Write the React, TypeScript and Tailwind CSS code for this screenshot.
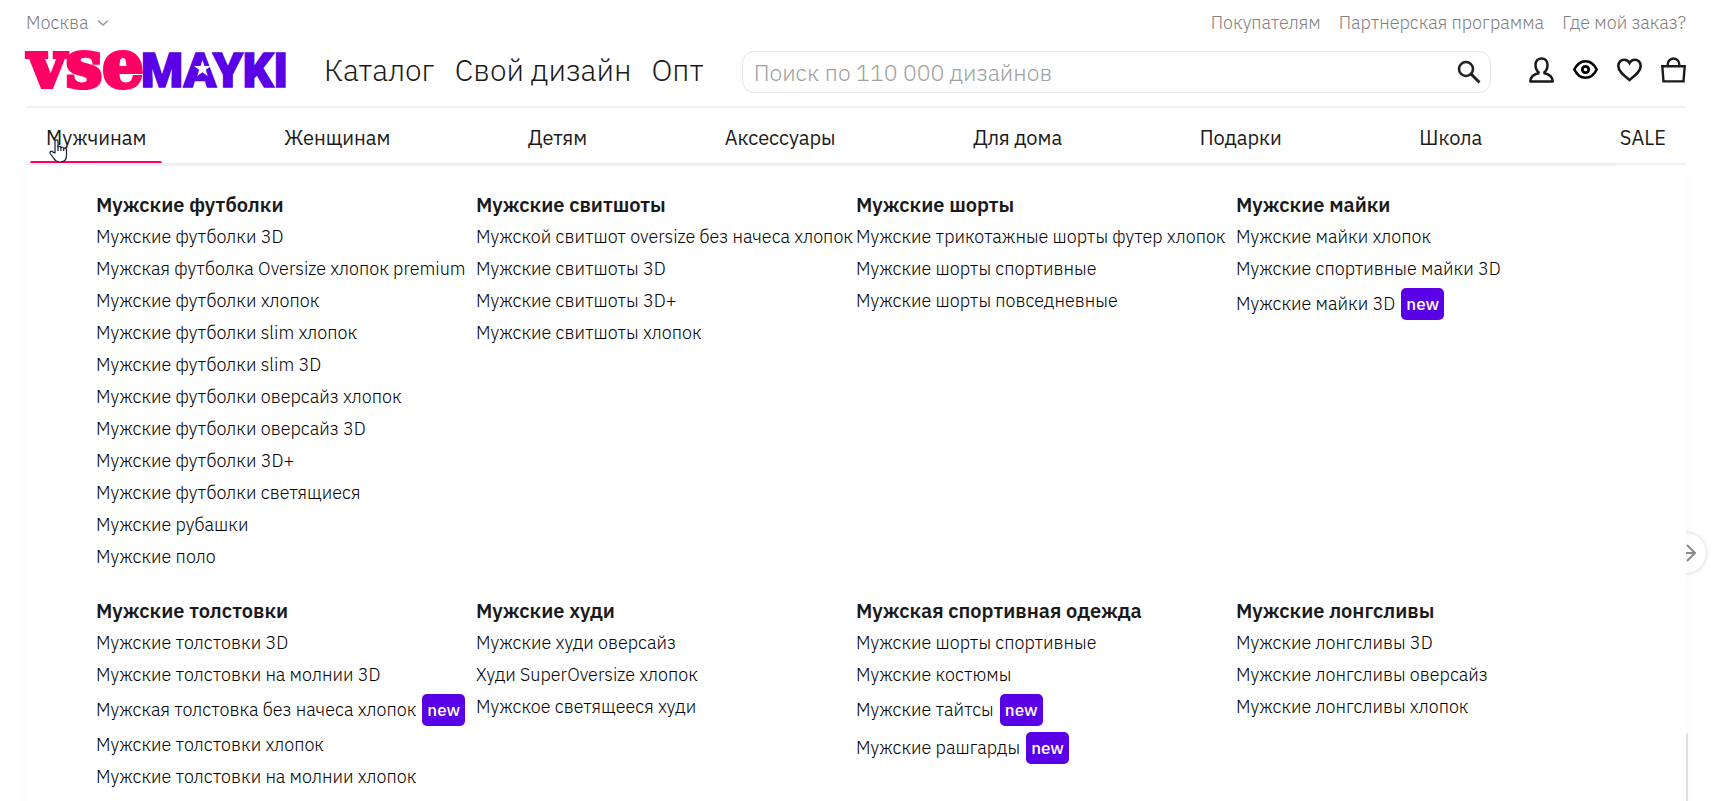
import React, { useState } from 'react';

type MenuItem = { label: string; isNew?: boolean };
type MenuGroup = { title: string; items: MenuItem[] };

const topLinks = ['Покупателям', 'Партнерская программа', 'Где мой заказ?'];
const mainLinks = ['Каталог', 'Свой дизайн', 'Опт'];
const categories = ['Мужчинам', 'Женщинам', 'Детям', 'Аксессуары', 'Для дома', 'Подарки', 'Школа', 'SALE'];

const groups: MenuGroup[] = [
  {
    title: 'Мужские футболки',
    items: [
      { label: 'Мужские футболки 3D' },
      { label: 'Мужская футболка Oversize хлопок premium' },
      { label: 'Мужские футболки хлопок' },
      { label: 'Мужские футболки slim хлопок' },
      { label: 'Мужские футболки slim 3D' },
      { label: 'Мужские футболки оверсайз хлопок' },
      { label: 'Мужские футболки оверсайз 3D' },
      { label: 'Мужские футболки 3D+' },
      { label: 'Мужские футболки светящиеся' },
      { label: 'Мужские рубашки' },
      { label: 'Мужские поло' },
    ],
  },
  {
    title: 'Мужские свитшоты',
    items: [
      { label: 'Мужской свитшот oversize без начеса хлопок' },
      { label: 'Мужские свитшоты 3D' },
      { label: 'Мужские свитшоты 3D+' },
      { label: 'Мужские свитшоты хлопок' },
    ],
  },
  {
    title: 'Мужские шорты',
    items: [
      { label: 'Мужские трикотажные шорты футер хлопок' },
      { label: 'Мужские шорты спортивные' },
      { label: 'Мужские шорты повседневные' },
    ],
  },
  {
    title: 'Мужские майки',
    items: [
      { label: 'Мужские майки хлопок' },
      { label: 'Мужские спортивные майки 3D' },
      { label: 'Мужские майки 3D', isNew: true },
    ],
  },
  {
    title: 'Мужские толстовки',
    items: [
      { label: 'Мужские толстовки 3D' },
      { label: 'Мужские толстовки на молнии 3D' },
      { label: 'Мужская толстовка без начеса хлопок', isNew: true },
      { label: 'Мужские толстовки хлопок' },
      { label: 'Мужские толстовки на молнии хлопок' },
    ],
  },
  {
    title: 'Мужские худи',
    items: [
      { label: 'Мужские худи оверсайз' },
      { label: 'Худи SuperOversize хлопок' },
      { label: 'Мужское светящееся худи' },
    ],
  },
  {
    title: 'Мужская спортивная одежда',
    items: [
      { label: 'Мужские шорты спортивные' },
      { label: 'Мужские костюмы' },
      { label: 'Мужские тайтсы', isNew: true },
      { label: 'Мужские рашгарды', isNew: true },
    ],
  },
  {
    title: 'Мужские лонгсливы',
    items: [
      { label: 'Мужские лонгсливы 3D' },
      { label: 'Мужские лонгсливы оверсайз' },
      { label: 'Мужские лонгсливы хлопок' },
    ],
  },
];

const App: React.FC = () => {
  const [active, setActive] = useState('Мужчинам');
  const [query, setQuery] = useState('');

  return (
    <div className="relative h-screen overflow-hidden bg-white pl-[26px] pr-[43px] flex flex-col font-['IBM_Plex_Sans',Roboto,sans-serif] text-[#1a1a1a]">
      <header className="border-b-2 border-[#f0f0f5] pb-[13px]">
        <div className="flex items-center justify-between pt-[11px] pb-4 text-[18px] leading-6 font-light text-[#808080]">
          <button type="button" className="flex items-center gap-2">
            Москва
            <svg width="14" height="10" viewBox="0 0 14 10" fill="none" stroke="#999" strokeWidth="1.6"><path d="M2 2.500l5 4.500 5-4.500" /></svg>
          </button>
          <nav className="flex gap-[18px]">
            {topLinks.map(link => <a key={link} href="#">{link}</a>)}
          </nav>
        </div>
        <div className="flex items-center">
          <a href="#" aria-label="vsemayki" className="shrink-0"><Logo /></a>
          <nav className="flex gap-5 ml-[36px] pb-1 text-[30px] leading-[38px] font-light text-[#1a1a1a] whitespace-nowrap">
            {mainLinks.map(link => <a key={link} href="#">{link}</a>)}
          </nav>
          <form onSubmit={e => e.preventDefault()} className="flex flex-1 items-center h-[42px] ml-[38px] mr-[38px] pl-[11px] pr-[9px] border border-[#e6e6e6] rounded-xl">
            <input
              type="text"
              aria-label="Поиск"
              placeholder="Поиск по 110 000 дизайнов"
              value={query}
              onChange={e => setQuery(e.target.value)}
              className="flex-1 min-w-0 text-[23px] font-light outline-none placeholder:text-[#a0a0a0]"
            />
            <button type="submit" aria-label="Найти">
              <svg width="24" height="24" viewBox="0 0 24 24" fill="none" stroke="#1f2328" strokeWidth="2.6"><circle cx="9" cy="9" r="7" /><path d="M14 14l8.500 8.500" strokeWidth="3" /></svg>
            </button>
          </form>
          <div className="flex gap-[19px] pb-1">
            <button type="button" aria-label="Профиль"><UserIcon /></button>
            <button type="button" aria-label="Просмотренные"><EyeIcon /></button>
            <button type="button" aria-label="Избранное"><HeartIcon /></button>
            <button type="button" aria-label="Корзина"><BagIcon /></button>
          </div>
        </div>
      </header>

      <nav className="flex justify-between px-1 border-b-2 border-[#f0f0f5] text-[20px] leading-7 whitespace-nowrap">
        {categories.map(category => (
          <button key={category} type="button" onClick={() => setActive(category)} className="relative px-4 h-[55px] pt-[5px]">
            {category}
            {active === category && (
              <>
                <span className="absolute inset-x-0 bottom-0 h-[2px] rounded-t-sm bg-[#ff0064]" />
                <HandCursor />
              </>
            )}
          </button>
        ))}
      </nav>

      <button type="button" aria-label="Вперёд" className="absolute right-[23px] top-[533px] size-10 rounded-full bg-white shadow-[0_0_4px_rgba(0,0,0,0.2)] flex items-center justify-center">
        <svg width="20" height="20" viewBox="0 0 20 20" fill="none" stroke="#8c8c8c" strokeWidth="2"><path d="M1 10h18M11 2l8 8-8 8" /></svg>
      </button>
      <div className="absolute right-[41px] top-[732px] bottom-0 w-8 rounded-tr-sm border-r-2 border-[#e3e3e3]" />

      <section className="relative flex-1 px-[70px] bg-white shadow-[0_10px_10px_rgba(0,0,0,0.04)]">
        <div className="h-px bg-[#f0f0f5]" />
        <div className="grid grid-cols-4 gap-y-[23px] pt-6">
          {groups.map(group => <GroupColumn key={group.title} group={group} />)}
        </div>
      </section>
    </div>
  );
};

const GroupColumn: React.FC<{ group: MenuGroup }> = ({ group }) => (
  <div className="whitespace-nowrap">
    <h3 className="text-[20px] leading-[30px] pb-px font-semibold">{group.title}</h3>
    <ul className="text-[18px] leading-8 font-light text-black">
      {group.items.map(item => (
        <li key={item.label} className={item.isNew ? 'flex items-center h-[38px]' : 'flex items-center h-8'}>
          <a href="#">{item.label}</a>
          {item.isNew && <span className="ml-[6px] px-[5px] rounded-[5px] bg-[#5a00e6] text-white text-[17px] font-medium">new</span>}
        </li>
      ))}
    </ul>
  </div>
);

const Logo: React.FC = () => (
  <svg width="262" height="42" viewBox="0 0 262 42" role="img" className="overflow-visible">
    <text x="262" y="36" textAnchor="end" fill="#5a00e6" stroke="#5a00e6" strokeWidth="1.5" className="font-['Roboto'] text-[48px] font-black">MAYKI</text>
    <path d="M176.500 8l8 21h-16z" fill="#5a00e6" />
    <path d="M176.500 9l2 6h6.500l-5.200 3.800 2 6.200-5.300-3.800-5.300 3.800 2-6.200-5.200-3.800h6.500z" fill="#fff" />
    <text x="2" y="36" fill="#ff0064" stroke="#ff0064" strokeWidth="4" className="font-['DejaVu_Serif'] text-[65px] font-bold">vse</text>
  </svg>
);

const UserIcon: React.FC = () => (
  <svg width="25" height="26" viewBox="0 0 25 26" fill="none" stroke="#1a1a1a" strokeWidth="2.500" strokeLinejoin="round">
    <path d="M10.500 16C7.500 14 6.500 11 6.500 8c0-4 2.500-6.600 6-6.600s6 2.600 6 6.600c0 3-1 6-4 8M10.500 16c-5 .8-8.900 3.200-9.200 8.500h22.400c-.3-5.300-4.200-7.700-9.200-8.500" />
  </svg>
);

const EyeIcon: React.FC = () => (
  <svg width="25" height="26" viewBox="0 0 25 26" fill="none" stroke="#000" strokeWidth="2.600">
    <path d="M1.300 12.500C4 7 8 4.200 12.500 4.200S21 7 23.700 12.500C21 18 17 20.800 12.500 20.800S4 18 1.300 12.500z" />
    <circle cx="12.500" cy="12.500" r="3.200" strokeWidth="2.800" />
  </svg>
);

const HeartIcon: React.FC = () => (
  <svg width="25" height="26" viewBox="0 0 25 26" fill="none" stroke="#1a1a1a" strokeWidth="2.600">
    <path d="M12.500 23C6 18 1.300 14 1.300 9c0-3.600 2.600-6.300 5.900-6.300 2.200 0 4.200 1.200 5.300 3.300 1.100-2.100 3.100-3.300 5.300-3.300 3.300 0 5.900 2.700 5.900 6.300 0 5-4.700 9-11.200 14z" />
  </svg>
);

const BagIcon: React.FC = () => (
  <svg width="25" height="26" viewBox="0 0 25 26" fill="none" stroke="#1a1a1a" strokeWidth="2.400">
    <path d="M1.300 9.300h22.400l-1.200 15.100H2.500zM6.500 9C6.500 4.500 8.800 1.500 12.500 1.500S18.500 4.500 18.500 9" />
  </svg>
);

const HandCursor: React.FC = () => (
  <svg width="19" height="24" viewBox="0 0 19 24" fill="#fff" stroke="#1a1a2e" strokeWidth="1.200" strokeLinejoin="round" className="absolute left-[19px] bottom-0 pointer-events-none">
    <path d="M6 14V2.500c0-2.200 3-2.200 3 0V8c.5-1 2.800-.8 2.900.7.700-.9 2.700-.6 2.800.9.800-.7 2.800-.3 2.800 1.400v5.500c0 4-2.500 6.500-6.500 6.500-3.500 0-5-1.500-6.500-4L1.200 14.500c-1-2 1-3 2.400-1.600z" />
    <path d="M9 7.500V12M11.900 8.500V12M14.700 9.500V12" fill="none" />
  </svg>
);

export default App;
